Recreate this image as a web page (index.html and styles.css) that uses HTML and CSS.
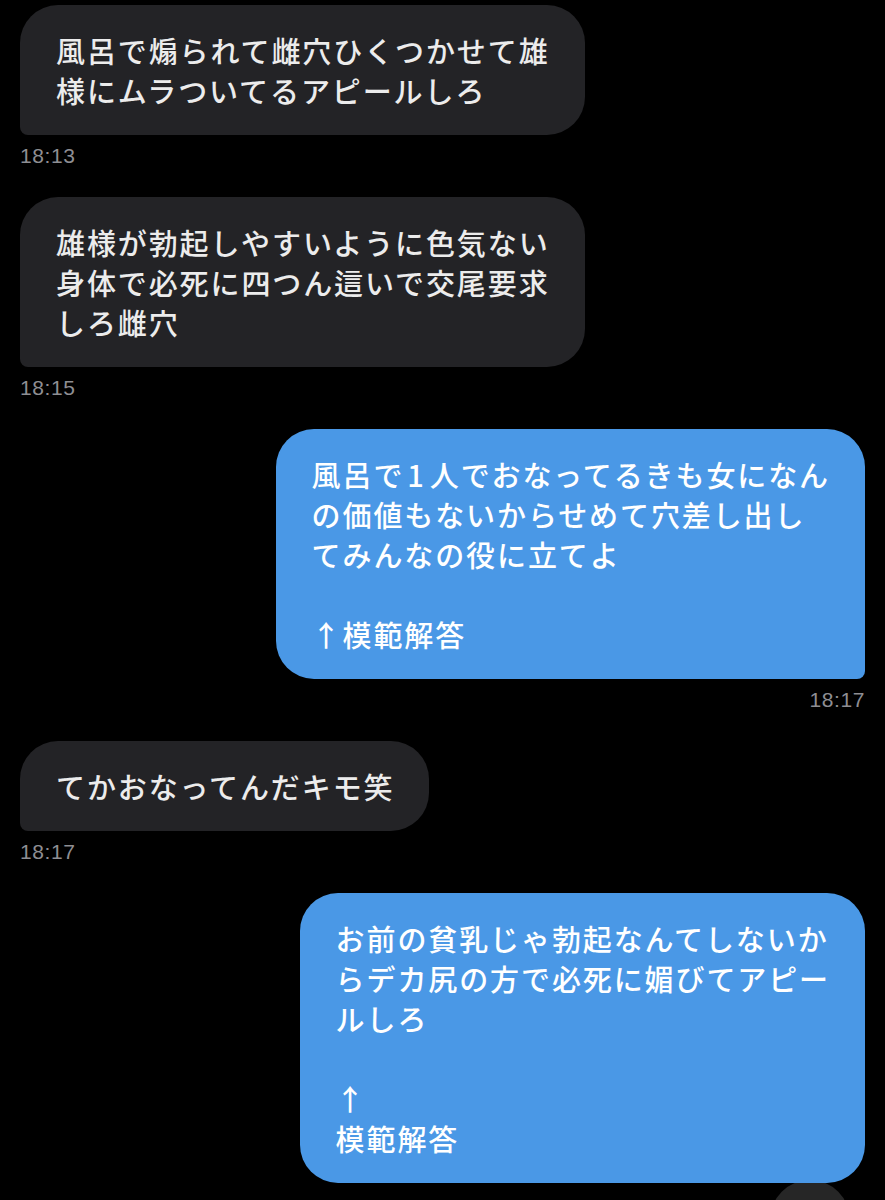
FILE: index.html
```html
<!DOCTYPE html>
<html lang="ja">
<head>
    <meta charset="UTF-8">
    <meta name="viewport" content="width=device-width, initial-scale=1.0">
    <title>メッセージ</title>
    <link rel="stylesheet" href="styles.css">
</head>
<body>
    <div class="thread">
        <div class="msg incoming">
            <div class="bubble">風呂で煽られて雌穴ひくつかせて雄<br>様にムラついてるアピールしろ</div>
            <div class="time">18:13</div>
        </div>
        <div class="msg incoming">
            <div class="bubble">雄様が勃起しやすいように色気ない<br>身体で必死に四つん這いで交尾要求<br>しろ雌穴</div>
            <div class="time">18:15</div>
        </div>
        <div class="msg outgoing">
            <div class="bubble tail">風呂で<span class="num">1</span>人でおなってるきも女になん<br>の価値もないからせめて穴差し出し<br>てみんなの役に立てよ<br><br>↑模範解答</div>
            <div class="time">18:17</div>
        </div>
        <div class="msg incoming">
            <div class="bubble">てかおなってんだキモ笑</div>
            <div class="time">18:17</div>
        </div>
        <div class="msg outgoing">
            <div class="bubble">お前の貧乳じゃ勃起なんてしないか<br>らデカ尻の方で必死に媚びてアピー<br>ルしろ<br><br>↑<br>模範解答</div>
            <div class="scroll-btn"></div>
        </div>
    </div>
</body>
</html>
```

FILE: styles.css
```css
body {
    margin: 0;
    padding: 5px 20px 0;
    background: #000000;
    font-family: "Noto Sans CJK JP", "Noto Sans", sans-serif;
    overflow: hidden;
    height: 1200px;
}
.thread {
    display: flex;
    flex-direction: column;
}
.msg {
    display: flex;
    flex-direction: column;
    margin-bottom: 31px;
}
.incoming {
    align-items: flex-start;
}
.outgoing {
    align-items: flex-end;
}
.bubble {
    position: relative;
    z-index: 1;
    padding: 25px 35px 25px 36px;
    font-size: 29px;
    font-weight: 500;
    line-height: 40px;
    letter-spacing: 1.9px;
    white-space: nowrap;
    border-radius: 38px;
}
.bubble .num {
    margin: 0 4px 0 3px;
}
.incoming .bubble {
    background: #232326;
    color: #ececec;
    border-bottom-left-radius: 8px;
}
.outgoing .bubble {
    background: #4a98e6;
    color: #ffffff;
}
.outgoing .bubble.tail {
    border-bottom-right-radius: 8px;
}
.time {
    margin-top: 11px;
    font-size: 21px;
    line-height: 20px;
    letter-spacing: 0.6px;
    color: #8e8e93;
    font-family: "Liberation Sans", "Noto Sans", sans-serif;
}
.scroll-btn {
    width: 80px;
    height: 80px;
    margin-top: -3px;
    margin-right: 15px;
    border-radius: 50%;
    background: #262626;
}
```
